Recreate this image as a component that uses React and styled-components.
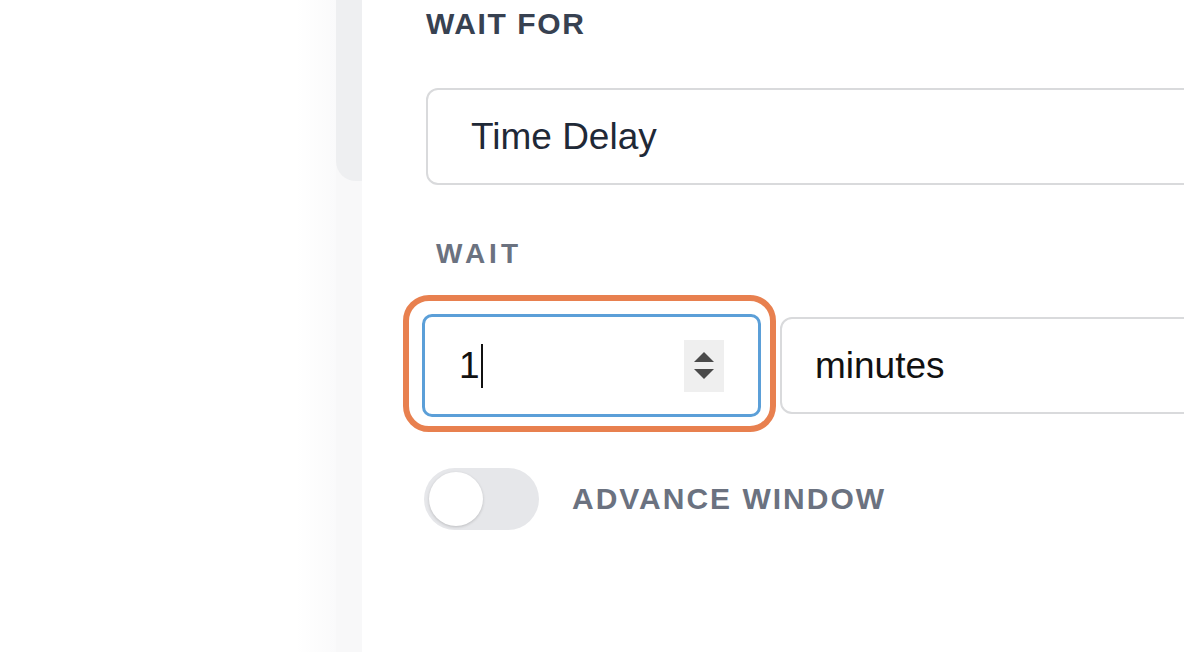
import React from "react";
import styled, { createGlobalStyle } from "styled-components";

const Global = createGlobalStyle`
  html, body { margin: 0; padding: 0; background: #ffffff; }
  body { font-family: "Liberation Sans", Arial, sans-serif; overflow: hidden; }
`;

const Page = styled.div`
  display: flex;
  width: 1190px;
  height: 652px;
  overflow: hidden;
  background: #ffffff;
`;

const Blank = styled.div`
  flex: 0 0 336px;
  background: linear-gradient(to right, #ffffff 0, #ffffff 296px, #fafafb 336px);
`;

const Rail = styled.div`
  flex: 0 0 26px;
  background: #f8f8f9;
`;

const RailTab = styled.div`
  height: 181px;
  background: #eeeff1;
  border-bottom-left-radius: 20px;
`;

const Main = styled.div`
  flex: 0 0 822px;
  overflow: hidden;
  background: #ffffff;
  padding-left: 64px;
  box-sizing: border-box;
`;

const Title = styled.div`
  margin-top: 7px;
  font-size: 30px;
  line-height: 34px;
  font-weight: 700;
  letter-spacing: 1.6px;
  color: #374151;
`;

const Select = styled.div`
  width: 900px;
  height: ${(p) => p.$h}px;
  box-sizing: border-box;
  border: 2px solid #d9dadc;
  border-radius: 12px;
  display: flex;
  align-items: center;
  padding-left: ${(p) => p.$pad}px;
  font-size: 37px;
  color: ${(p) => p.$color};
  flex-shrink: 0;
`;

const SelectGap = styled.div`
  margin-top: 47px;
`;

const Label = styled.div`
  margin-top: 54px;
  margin-left: 10px;
  font-size: 28px;
  line-height: 30px;
  font-weight: 700;
  letter-spacing: 4px;
  color: #6b7280;
`;

const Row = styled.div`
  margin-top: 45px;
  display: flex;
  align-items: center;
  gap: 19px;
  margin-left: -4px;
`;

const NumberWrap = styled.div`
  position: relative;
  flex: 0 0 auto;
  &::before {
    content: "";
    position: absolute;
    inset: -19px -15px -15px -19px;
    border: 6px solid #e8804f;
    border-radius: 26px;
    pointer-events: none;
  }
`;

const NumberBox = styled.div`
  width: 339px;
  height: 103px;
  box-sizing: border-box;
  border: 3.5px solid #5b9fd8;
  border-radius: 10px;
  display: flex;
  align-items: center;
  padding-left: 34px;
  padding-right: 34px;
  font-size: 37px;
  color: #111111;
`;

const Caret = styled.span`
  display: inline-block;
  width: 2px;
  height: 44px;
  background: #111;
  margin-left: 1px;
`;

const Spacer = styled.div`
  flex: 1;
`;

const Spinner = styled.div`
  width: 40px;
  height: 52px;
  background: #efefef;
  display: flex;
  flex-direction: column;
  align-items: center;
  justify-content: center;
  gap: 7px;
`;

const Arrow = styled.div`
  width: 0;
  height: 0;
  border-left: 10px solid transparent;
  border-right: 10px solid transparent;
  ${(p) => (p.$up ? "border-bottom: 10px solid #4a4a4a;" : "border-top: 10px solid #4a4a4a;")}
`;

const ToggleRow = styled.div`
  margin-top: 51px;
  display: flex;
  align-items: center;
  gap: 33px;
  margin-left: -2px;
`;

const Toggle = styled.div`
  width: 115px;
  height: 62px;
  border-radius: 31px;
  background: #e6e7ea;
  display: flex;
  align-items: center;
  padding-left: 5px;
  box-sizing: border-box;
`;

const Knob = styled.div`
  width: 54px;
  height: 54px;
  border-radius: 50%;
  background: #ffffff;
  box-shadow: 0 1px 3px rgba(0, 0, 0, 0.18);
`;

const ToggleLabel = styled.div`
  font-size: 30px;
  font-weight: 700;
  letter-spacing: 2px;
  color: #6b7280;
`;

export default function App() {
  return (
    <>
      <Global />
      <Page>
        <Blank />
        <Rail>
          <RailTab />
        </Rail>
        <Main>
          <Title>WAIT FOR</Title>
          <SelectGap />
          <Select $h={97} $pad={43} $color="#1f2937">Time Delay</Select>
          <Label>WAIT</Label>
          <Row>
            <NumberWrap>
              <NumberBox>
                <span>1</span>
                <Caret />
                <Spacer />
                <Spinner>
                  <Arrow $up />
                  <Arrow />
                </Spinner>
              </NumberBox>
            </NumberWrap>
            <Select $h={97} $pad={33} $color="#111111">minutes</Select>
          </Row>
          <ToggleRow>
            <Toggle>
              <Knob />
            </Toggle>
            <ToggleLabel>ADVANCE WINDOW</ToggleLabel>
          </ToggleRow>
        </Main>
      </Page>
    </>
  );
}
